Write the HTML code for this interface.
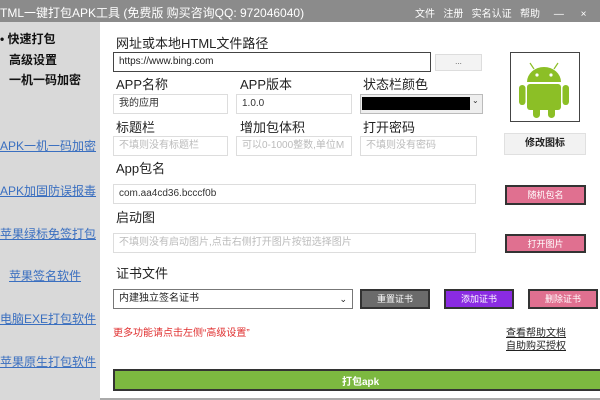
<!DOCTYPE html>
<html><head><meta charset="utf-8"><style>
*{margin:0;padding:0;box-sizing:border-box}
body{width:600px;height:400px;overflow:hidden;background:#fff;font-family:"Liberation Sans","Noto Sans CJK SC",sans-serif;position:relative}
.a{position:absolute;white-space:nowrap}
.lb{font-size:13px;color:#222}
.in{position:absolute;border:1px solid #ddd;background:#fff;font-size:10px;color:#bbb;padding-left:5px;line-height:18px;white-space:nowrap;overflow:hidden}
.btn{position:absolute;border:2px solid #333;color:#fff;font-size:9px;text-align:center;line-height:16px}
.sl{position:absolute;font-size:12px;color:#3a6fc0;text-decoration:underline;white-space:nowrap}
</style></head><body>
<div class="a" style="left:0;top:0;width:600px;height:22px;background:#8b8b8b"></div>
<div class="a" style="left:0;top:4px;font-size:12px;color:#fff">TML一键打包APK工具 (免费版 购买咨询QQ: 972046040)</div>
<div class="a" style="left:415px;top:5px;font-size:10px;color:#fff">文件&nbsp;&nbsp;&nbsp;注册&nbsp;&nbsp;&nbsp;实名认证&nbsp;&nbsp;&nbsp;帮助&nbsp;&nbsp;&nbsp;&nbsp;&nbsp;—&nbsp;&nbsp;&nbsp;&nbsp;&nbsp;&nbsp;×</div>
<div class="a" style="left:0;top:22px;width:100px;height:378px;background:#d9d9d9"></div>
<div class="a" style="left:0;top:30px;font-size:12px;font-weight:bold;color:#111">• 快速打包</div>
<div class="a" style="left:9px;top:51px;font-size:12px;font-weight:bold;color:#111">高级设置</div>
<div class="a" style="left:9px;top:71px;font-size:12px;font-weight:bold;color:#111">一机一码加密</div>
<div class="sl" style="left:0;top:137px">APK一机一码加密</div>
<div class="sl" style="left:0;top:182px">APK加固防误报毒</div>
<div class="sl" style="left:0;top:225px">苹果绿标免签打包</div>
<div class="sl" style="left:9px;top:267px">苹果签名软件</div>
<div class="sl" style="left:0;top:310px">电脑EXE打包软件</div>
<div class="sl" style="left:0;top:353px">苹果原生打包软件</div>

<div class="a lb" style="left:116px;top:33px">网址或本地HTML文件路径</div>
<div class="in" style="left:113px;top:52px;width:318px;height:20px;border:1px solid #444;color:#222;font-size:10px">https://www.bing.com</div>
<div class="a" style="left:435px;top:54px;width:47px;height:17px;background:#f3f3f3;border:1px solid #ddd;font-size:8px;color:#555;text-align:center;line-height:14px">...</div>
<div class="a" style="left:510px;top:52px;width:70px;height:70px;border:1px solid #444;background:#fff"></div>
<svg class="a" style="left:510px;top:52px" width="70" height="70" viewBox="0 0 70 70">
<g fill="#8cbf26" stroke="none">
<path d="M17 30 A17 15 0 0 1 51 30 Z"/>
<rect x="17" y="32" width="34" height="26" rx="3"/>
<rect x="9" y="33" width="6.5" height="20" rx="3.2"/>
<rect x="52.5" y="33" width="6.5" height="20" rx="3.2"/>
<rect x="23" y="52" width="7" height="14" rx="3.5"/>
<rect x="38" y="52" width="7" height="14" rx="3.5"/>
</g>
<g stroke="#8cbf26" stroke-width="1.2"><line x1="24" y1="17" x2="20" y2="11"/><line x1="44" y1="17" x2="48" y2="11"/></g>
<circle cx="27" cy="23" r="1.6" fill="#fff"/><circle cx="41" cy="23" r="1.6" fill="#fff"/>
</svg>

<div class="a lb" style="left:116px;top:74px">APP名称</div>
<div class="a lb" style="left:240px;top:74px">APP版本</div>
<div class="a lb" style="left:363px;top:74px">状态栏颜色</div>
<div class="in" style="left:113px;top:94px;width:115px;height:20px;color:#333">我的应用</div>
<div class="in" style="left:236px;top:94px;width:116px;height:20px;color:#333">1.0.0</div>
<div class="a" style="left:360px;top:94px;width:123px;height:20px;border:1px solid #bbb;background:#eee"></div>
<div class="a" style="left:362px;top:97px;width:108px;height:13px;background:#000"></div>
<div class="a" style="left:472px;top:96px;font-size:8px;color:#333">⌄</div>

<div class="a lb" style="left:116px;top:117px">标题栏</div>
<div class="a lb" style="left:240px;top:117px">增加包体积</div>
<div class="a lb" style="left:363px;top:117px">打开密码</div>
<div class="in" style="left:113px;top:136px;width:115px;height:20px">不填则没有标题栏</div>
<div class="in" style="left:236px;top:136px;width:116px;height:20px">可以0-1000整数,单位M</div>
<div class="in" style="left:360px;top:136px;width:117px;height:20px">不填则没有密码</div>
<div class="a" style="left:504px;top:133px;width:82px;height:22px;background:#f2f2f2;border:1px solid #e0e0e0;font-size:10px;font-weight:bold;color:#222;text-align:center;line-height:20px">修改图标</div>

<div class="a lb" style="left:116px;top:158px">App包名</div>
<div class="in" style="left:113px;top:184px;width:363px;height:20px;color:#333">com.aa4cd36.bcccf0b</div>
<div class="btn" style="left:505px;top:185px;width:81px;height:20px;background:#e07090">随机包名</div>

<div class="a lb" style="left:116px;top:207px">启动图</div>
<div class="in" style="left:113px;top:233px;width:363px;height:20px">不填则没有启动图片,点击右侧打开图片按钮选择图片</div>
<div class="btn" style="left:505px;top:234px;width:81px;height:19px;background:#e07090">打开图片</div>

<div class="a lb" style="left:116px;top:263px">证书文件</div>
<div class="in" style="left:113px;top:289px;width:240px;height:20px;border:1px solid #777;color:#222">内建独立签名证书<span style="position:absolute;right:5px;top:0;font-size:9px">⌄</span></div>
<div class="btn" style="left:360px;top:289px;width:70px;height:20px;background:#6b6b6b">重置证书</div>
<div class="btn" style="left:444px;top:289px;width:70px;height:20px;background:#8a2be2">添加证书</div>
<div class="btn" style="left:528px;top:289px;width:70px;height:20px;background:#e07090">删除证书</div>

<div class="a" style="left:113px;top:324px;font-size:10px;color:#e03030">更多功能请点击左侧“高级设置”</div>
<div class="a" style="left:506px;top:324px;font-size:10px;color:#222;text-decoration:underline">查看帮助文档</div>
<div class="a" style="left:506px;top:337px;font-size:10px;color:#222;text-decoration:underline">自助购买授权</div>

<div class="a" style="left:113px;top:369px;width:490px;height:22px;background:#7cb840;border:2px solid #333"></div>
<div class="a" style="left:342px;top:373px;font-size:10px;color:#fff;font-weight:bold">打包apk</div>
<div class="a" style="left:100px;top:398px;width:500px;height:2px;background:#aaa"></div>
</body></html>
